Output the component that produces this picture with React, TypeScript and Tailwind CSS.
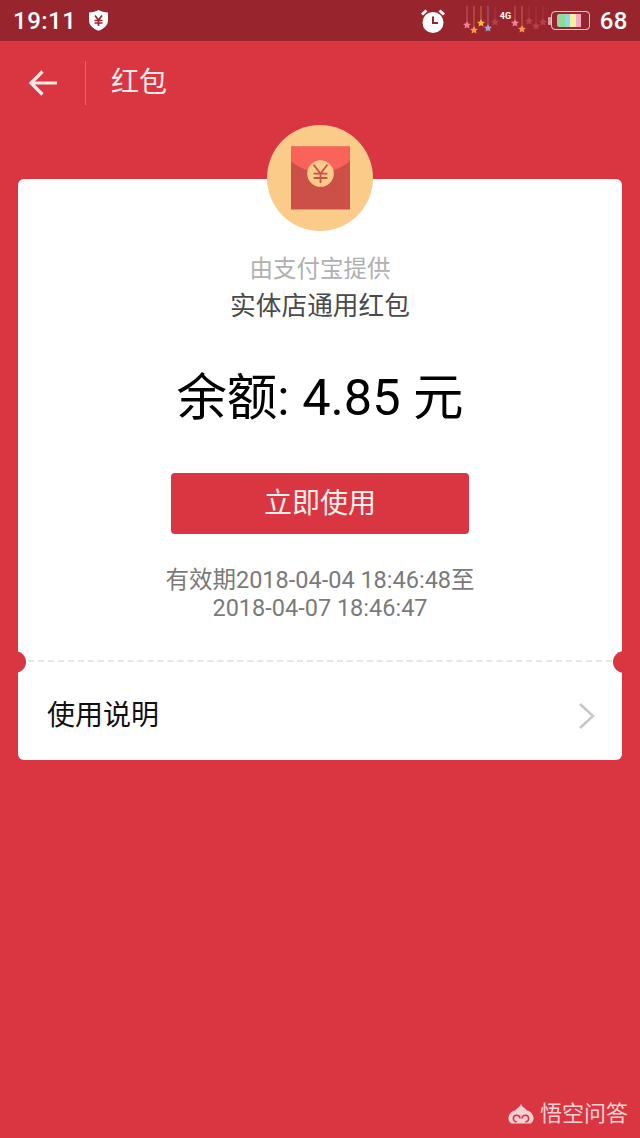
const font = { fontFamily: '"Roboto", "Noto Sans CJK SC", sans-serif' };

const stars = [
  { x: 2, len: 17, c: "#f07f8f" },
  { x: 9, len: 22, c: "#f2994e" },
  { x: 16, len: 15, c: "#f5b83f" },
  { x: 23, len: 20, c: "#9fa6d6" },
  { x: 30, len: 14, c: "#b8404c" },
  { x: 50, len: 15, c: "#f07f8f" },
  { x: 57, len: 21, c: "#f2994e" },
  { x: 64, len: 13, c: "#b8404c" },
  { x: 71, len: 18, c: "#b8404c" },
  { x: 78, len: 14, c: "#b8404c" },
];

function StarSignal() {
  return (
    <svg width="84" height="30" viewBox="0 0 84 30" className="shrink-0">
      {stars.map((s, i) => (
        <g key={i}>
          <line x1={s.x + 2} y1="0" x2={s.x + 2} y2={s.len} stroke={s.c} strokeWidth="0.8" opacity="0.7" />
          <path
            d={`M${s.x + 2} ${s.len - 2}l1.2 2.6 2.8.3-2.1 1.9.6 2.8-2.5-1.4-2.5 1.4.6-2.8-2.1-1.9 2.8-.3z`}
            fill={s.c}
          />
        </g>
      ))}
    </svg>
  );
}

function StatusBar() {
  return (
    <div className="flex h-[41px] items-center justify-between bg-[#98252e] pl-[13px] pr-[12px] text-white">
      <div className="flex items-center gap-[12px]">
        <span className="text-[24px] font-medium leading-none tracking-[0.5px]">19:11</span>
        <svg width="21" height="23" viewBox="0 0 21 23">
          <path d="M10.500 1c2.800 1.600 5.600 2.300 9.500 2.500v8c0 4.800-3.800 8-9.500 10.300C4.800 19.500 1 16.300 1 11.500v-8C4.900 3.300 7.700 2.600 10.500 1z" fill="#fff" />
          <path d="M7 6.500l3.500 4.500 3.500-4.500M6.500 11.500h8M6.500 14h8M10.500 11v6" stroke="#98252e" strokeWidth="1.700" fill="none" />
        </svg>
      </div>
      <div className="relative flex items-center">
        <svg width="26" height="26" viewBox="0 0 26 26" className="mr-[17px]">
          <circle cx="13" cy="14.500" r="10.500" fill="#fff" />
          <path d="M2 6.500L6.500 2.500M24 6.500L19.500 2.500" stroke="#fff" strokeWidth="3" />
          <path d="M13 8.500v6.500h5" stroke="#98252e" strokeWidth="2" fill="none" />
        </svg>
        <div className="relative">
          <StarSignal />
          <span className="absolute left-[37px] top-[6px] text-[9px] font-bold leading-none text-white">4G</span>
        </div>
        <div className="ml-[1px] flex items-center">
          <div className="h-[8px] w-[3px] rounded-l-[1px] bg-[#d9a0a5]" />
          <div className="flex h-[19px] w-[39px] items-center justify-center rounded-[4px] border-[1.500px] border-[#f2d3d5] pl-[5px]">
            <div className="h-[13px] w-[8px] rounded-l-[2px] bg-[#8fdc9a]" />
            <div className="h-[13px] w-[5px] bg-[#8fd8e8]" />
            <div className="h-[13px] w-[6px] bg-[#f8ee9c]" />
            <div className="h-[13px] w-[5px] bg-[#f4a9c0]" />
            <div className="h-[13px] w-[8px] bg-[#98252e]" />
          </div>
        </div>
        <span className="ml-[10px] text-[24px] font-medium leading-none tracking-[0.5px]">68</span>
      </div>
    </div>
  );
}

function Header() {
  return (
    <div className="flex h-[84px] items-center">
      <div className="ml-[28px] flex w-[57px] items-center">
        <svg width="30" height="28" viewBox="0 0 30 28">
          <path d="M29 14H3M14.500 2.500L3 14l11.500 11.500" stroke="#fbe9ea" strokeWidth="3.200" fill="none" />
        </svg>
      </div>
      <div className="h-[44px] w-px bg-[#e8636c]" />
      <span className="ml-[25px] text-[28px] leading-none text-[#fbe9ea]">红包</span>
    </div>
  );
}

function RedPacket() {
  return (
    <div className="relative z-10 mx-auto flex h-[106px] w-[106px] items-center justify-center rounded-full bg-[#fbcb89]">
      <svg width="59" height="64" viewBox="0 0 60 64" className="mt-[-1px]">
        <rect width="60" height="64" fill="#cc4f48" />
        <path d="M0 0h60v15C50 23 40 26 30 26S10 23 0 15z" fill="#fb6259" />
        <circle cx="30" cy="27.500" r="13.500" fill="#fbcb89" />
        <path d="M23 18.500l7 9 7-9M23 27.500h14M23 32h14M30 27.500v9.500" stroke="#cc4f48" strokeWidth="1.800" fill="none" />
      </svg>
    </div>
  );
}

function Notch({ side }: { side: "left" | "right" }) {
  return (
    <div
      className={`absolute top-[-11px] h-[22px] w-[22px] rounded-full bg-[#d93641] ${
        side === "left" ? "left-[-14px]" : "right-[-13px]"
      }`}
    />
  );
}

export default function App() {
  return (
    <div className="relative min-h-[1138px] overflow-hidden bg-[#d93641]" style={font}>
      <StatusBar />
      <Header />
      <RedPacket />
      <div className="mx-[18px] mt-[-52px] overflow-hidden rounded-[6px] bg-white">
        <div className="flex h-[481px] flex-col items-center pt-[76px]">
          <div className="text-[23.500px] leading-[28px] text-[#b0b0b0]">由支付宝提供</div>
          <div className="mt-[8px] text-[25.700px] leading-[30px] text-[#4a4a4a]">实体店通用红包</div>
          <div className="mt-[49px] text-[50.500px] leading-[56px] text-black">余额: 4.85 元</div>
          <button className="mt-[47px] h-[61px] w-[298px] rounded-[4px] bg-[#d93641] text-[28px] text-[#fdeeee]">
            立即使用
          </button>
          <div className="mt-[32px] text-center text-[23.500px] leading-[28px] text-[#7a7a7a]">
            有效期2018-04-04 18:46:48至
            <br />
            2018-04-07 18:46:47
          </div>
        </div>
        <div className="relative border-t-2 border-dashed border-[#e6e6e6]">
          <Notch side="left" />
          <Notch side="right" />
          <div className="flex h-[98px] items-center justify-between pl-[29px] pr-[26px] pt-[10px]">
            <span className="text-[28px] text-[#111]">使用说明</span>
            <svg width="18" height="28" viewBox="0 0 18 28">
              <path d="M2 2l13 12L2 26" stroke="#c8c8c8" strokeWidth="2.600" fill="none" />
            </svg>
          </div>
        </div>
      </div>
      <div className="absolute bottom-[13px] right-[12px] flex items-center gap-[6px] text-[#f6d0d2]">
        <svg width="26" height="20" viewBox="0 0 26 20">
          <path d="M13 0c1 3 4 4 6 6.500 3 .5 6 3 6.500 7 .3 3-1 5-3 6H3.500c-2-1-3.300-3-3-6 .5-4 3.500-6.500 6.500-7C9 4 12 3 13 0z" fill="#f6d0d2" />
          <path d="M12 14.500a3.300 3.300 0 1 0-3.300 3.300h-2M14 14.500a3.300 3.300 0 1 1 3.300 3.300h2" fill="none" stroke="#d93641" strokeWidth="1.600" />
        </svg>
        <span className="text-[22px] leading-none">悟空问答</span>
      </div>
    </div>
  );
}
